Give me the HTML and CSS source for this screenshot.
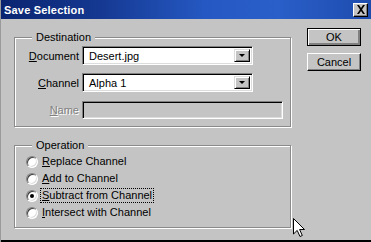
FILE: index.html
```html
<!DOCTYPE html>
<html>
<head>
<meta charset="utf-8">
<link rel="stylesheet" href="styles.css">
</head>
<body>
<div class="win">
  <div class="title">
    <span class="title-text">Save Selection</span>
    <span class="close">
      <svg width="10" height="9" viewBox="0 0 10 9"><path d="M1 0h2l2 3 2-3h2L6 4.5 9 9H7L5 6 3 9H1l3-4.5z" fill="#000"/></svg>
    </span>
  </div>
  <div class="body">
    <div class="left">
      <div class="group dest">
        <span class="legend">Destination</span>
        <div class="form">
          <label class="lbl"><u>D</u>ocument</label>
          <div class="select"><span class="val">Desert.jpg</span><span class="drop"><i class="tri"></i></span></div>
          <label class="lbl"><u>C</u>hannel</label>
          <div class="select"><span class="val">Alpha 1</span><span class="drop"><i class="tri"></i></span></div>
          <label class="lbl dis"><u>N</u>ame</label>
          <div class="field"></div>
        </div>
      </div>
      <div class="group op">
        <span class="legend">Operation</span>
        <div class="radios">
          <div class="radio"><span class="dot"></span><span class="rl"><u>R</u>eplace Channel</span></div>
          <div class="radio"><span class="dot"></span><span class="rl"><u>A</u>dd to Channel</span></div>
          <div class="radio"><span class="dot on"></span><span class="rl focus"><u>S</u>ubtract from Channel</span></div>
          <div class="radio"><span class="dot"></span><span class="rl"><u>I</u>ntersect with Channel</span></div>
        </div>
      </div>
    </div>
    <div class="buttons">
      <div class="btn default">OK</div>
      <div class="btn">Cancel</div>
    </div>
  </div>
  <div class="bottom"></div>
  <svg class="cursor" width="13" height="20" viewBox="0 0 13 20"><path d="M0.5 0.5 L0.5 16 L4.2 12.4 L7 18.5 L9.3 17.5 L6.6 11.5 L11.5 11.5 Z" fill="#fff" stroke="#000" stroke-width="1"/></svg>
</div>
</body>
</html>
```
FILE: styles.css
```css
* { box-sizing: border-box; }
html, body { margin: 0; padding: 0; }
body {
  font-family: "Liberation Sans", Arial, sans-serif;
  font-size: 11px;
  color: #000;
  background: #c4c4c4;
}
.win {
  position: relative;
  width: 371px;
  height: 242px;
  background: #c4c4c4;
  display: flex;
  flex-direction: column;
  overflow: hidden;
  border-left: 1px solid #9a9a9a;
}
.title {
  height: 19px;
  flex: none;
  display: flex;
  align-items: center;
  justify-content: space-between;
  padding: 0 3px 0 3px;
  background: linear-gradient(90deg, #0a2470 0%, #14378f 25%, #2558c2 55%, #2a5ec8 75%, #1d4cae 100%);
}
.title-text {
  color: #fff;
  font-weight: bold;
  font-size: 11px;
  letter-spacing: 0.2px;
}
.close {
  width: 15px;
  height: 14px;
  background: #c4c4c4;
  border: 1px solid;
  border-color: #fff #000 #000 #fff;
  box-shadow: inset -1px -1px 0 #808080;
  display: flex;
  align-items: center;
  justify-content: center;
}
.body {
  flex: 1;
  display: flex;
  padding-left: 13px;
}
.left {
  width: 277px;
  display: flex;
  flex-direction: column;
  gap: 18px;
  padding-top: 18px;
}
.group {
  position: relative;
  border: 1px solid #8a8a8a;
  box-shadow: inset 1px 1px 0 #fff, 1px 1px 0 #fff;
}
.legend {
  position: absolute;
  top: -8px;
  left: 17px;
  padding: 0 4px;
  background: #c4c4c4;
  line-height: 14px;
}
.dest { height: 90px; }
.op { height: 83px; }
.form {
  display: grid;
  grid-template-columns: 63px 171px;
  grid-auto-rows: 19px;
  column-gap: 3px;
  row-gap: 8px;
  padding-top: 8px;
  padding-left: 1px;
  align-items: center;
}
.lbl {
  text-align: right;
}
.lbl.dis {
  color: #808080;
  text-shadow: 1px 1px 0 #fff;
}
.select {
  height: 19px;
  display: flex;
  align-items: stretch;
  background: #fff;
  border: 1px solid;
  border-color: #808080 #fff #fff #808080;
  box-shadow: inset 1px 1px 0 #000, inset -1px -1px 0 #dcdcdc;
  padding: 2px;
}
.val {
  flex: 1;
  padding-left: 4px;
  line-height: 14px;
}
.drop {
  width: 16px;
  background: #c4c4c4;
  border: 1px solid;
  border-color: #dcdcdc #000 #000 #dcdcdc;
  box-shadow: inset 1px 1px 0 #fff, inset -1px -1px 0 #808080;
  display: flex;
  align-items: center;
  justify-content: center;
}
.tri {
  width: 0;
  height: 0;
  border-left: 3px solid transparent;
  border-right: 3px solid transparent;
  border-top: 3px solid #000;
}
.field {
  width: 201px;
  height: 18px;
  background: #c4c4c4;
  border: 1px solid;
  border-color: #808080 #fff #fff #808080;
  box-shadow: inset 1px 1px 0 #000, inset -1px -1px 0 #dcdcdc;
}
.radios {
  display: flex;
  flex-direction: column;
  padding-top: 7px;
  padding-left: 11px;
}
.radio {
  height: 17px;
  display: flex;
  align-items: center;
  gap: 2px;
}
.dot {
  width: 12px;
  height: 12px;
  border-radius: 50%;
  background: #fff;
  border: 1px solid;
  border-color: #808080 #fff #fff #808080;
  box-shadow: inset 1px 1px 0 #404040, inset -1px -1px 0 #dcdcdc;
  position: relative;
  flex: none;
}
.dot.on::after {
  content: "";
  position: absolute;
  left: 3px;
  top: 3px;
  width: 4px;
  height: 4px;
  border-radius: 50%;
  background: #000;
}
.rl {
  border: 1px dotted transparent;
  padding: 0 1px;
  line-height: 13px;
}
.rl.focus {
  border-color: #000;
}
.buttons {
  margin-left: 16px;
  padding-top: 9px;
  display: flex;
  flex-direction: column;
  gap: 7px;
}
.btn {
  width: 54px;
  height: 18px;
  display: flex;
  align-items: center;
  justify-content: center;
  background: #c4c4c4;
  border: 1px solid;
  border-color: #fff #000 #000 #fff;
  box-shadow: inset -1px -1px 0 #808080;
}
.btn.default {
  border: 1px solid #000;
  box-shadow: inset 1px 1px 0 #fff, inset -2px -2px 0 #808080;
}
.bottom {
  height: 2px;
  flex: none;
  background: #000;
}
.cursor {
  position: absolute;
  left: 292px;
  top: 218px;
}
```
